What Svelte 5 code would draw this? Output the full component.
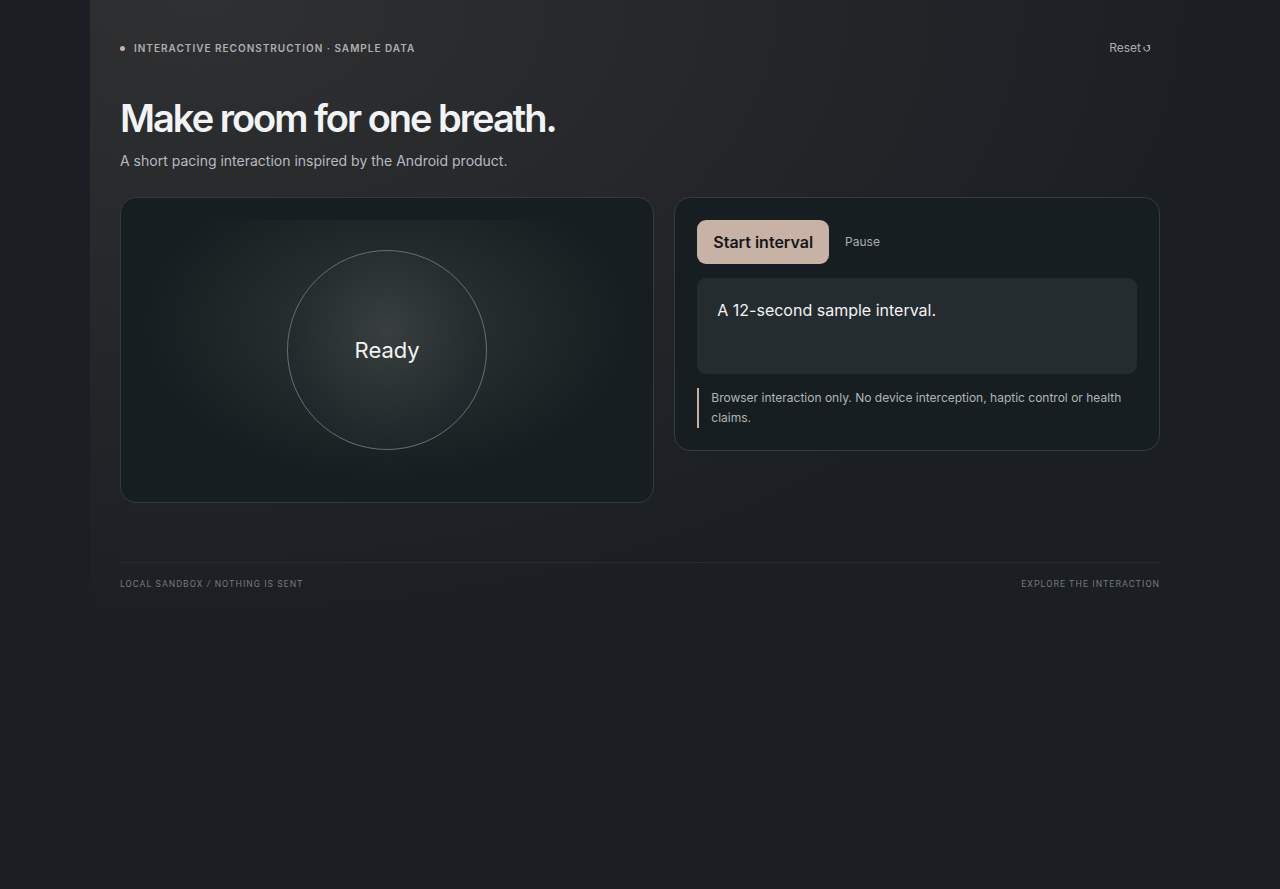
<script>
	import { onDestroy } from 'svelte';

	const LENGTH = 12;

	let elapsed = 0;
	let running = false;
	let timer;

	$: finished = elapsed >= LENGTH;
	$: label = finished
		? 'Done'
		: elapsed === 0 && !running
			? 'Ready'
			: elapsed % 8 < 4
				? 'Inhale'
				: 'Exhale';
	$: status =
		elapsed === 0 && !running
			? 'A 12-second sample interval.'
			: finished
				? 'Interval complete.'
				: `${LENGTH - elapsed} seconds left.`;

	function tick() {
		elapsed += 1;
		if (elapsed >= LENGTH) pause();
	}

	function start() {
		if (running) return;
		if (elapsed >= LENGTH) elapsed = 0;
		running = true;
		timer = setInterval(tick, 1000);
	}

	function pause() {
		running = false;
		clearInterval(timer);
	}

	function reset() {
		pause();
		elapsed = 0;
	}

	onDestroy(() => clearInterval(timer));
</script>

<main class="shell">
	<header class="topbar">
		<span class="eyebrow"><i class="dot"></i>Interactive reconstruction · sample data</span>
		<button class="quiet reset" on:click={reset}>
			Reset
			<svg viewBox="0 0 8 8" width="8" height="8" aria-hidden="true">
				<path d="M1.3 2.8A2.8 2.8 0 1 0 6 2.4M3.8 1.5h3.4M6 1.5v2.6" />
			</svg>
		</button>
	</header>

	<h1>Make room for one breath.</h1>
	<p class="lede">A short pacing interaction inspired by the Android product.</p>

	<div class="grid">
		<section class="card">
			<div class="stage">
				<div class="orb" class:running>{label}</div>
			</div>
		</section>

		<section class="card controls">
			<div class="actions">
				<button class="primary" on:click={start}>Start interval</button>
				<button class="quiet" on:click={pause}>Pause</button>
			</div>
			<div class="status" aria-live="polite">{status}</div>
			<p class="note">
				Browser interaction only. No device interception, haptic control or health claims.
			</p>
		</section>
	</div>

	<footer>
		<span>Local sandbox / nothing is sent</span>
		<span>Explore the interaction</span>
	</footer>
</main>

<style>
	:global(body) {
		background: #1b1e22;
	}

	.shell {
		box-sizing: border-box;
		max-width: 1100px;
		margin: 0 auto;
		padding: 26px 30px 24px;
		color: #f2f3f5;
		font-family: Inter, 'Liberation Sans', sans-serif;
		font-size: 16px;
		line-height: 24px;
		background: radial-gradient(at 10% 0, #2f3031, #1b1e23 74%);
	}

	.topbar,
	footer {
		display: flex;
		align-items: center;
		justify-content: space-between;
	}

	.eyebrow {
		display: flex;
		align-items: center;
		gap: 9px;
		color: #afb0b2;
		font-size: 10px;
		font-weight: 600;
		letter-spacing: 1px;
		text-transform: uppercase;
	}

	.dot {
		width: 5px;
		height: 5px;
		border-radius: 50%;
		background: #c9b3a6;
	}

	button {
		min-height: 44px;
		border: 0;
		border-radius: 9px;
		font: inherit;
		cursor: pointer;
	}

	.quiet {
		padding: 0 9px;
		background: none;
		color: #a9adb3;
		font-size: 12px;
	}

	.reset {
		display: flex;
		align-items: center;
		gap: 2px;
	}

	.reset svg {
		fill: none;
		stroke: currentColor;
		stroke-width: 1.2;
	}

	.primary {
		padding: 0 16px;
		background: #c8b2a5;
		color: #15171b;
		font-weight: 600;
	}

	h1 {
		margin: 26px 0 0;
		font-size: 38px;
		font-weight: 600;
		line-height: 44px;
		letter-spacing: -2px;
	}

	.lede {
		margin: 9px 0 0;
		color: #b6bbc2;
		font-size: 14px;
	}

	.grid {
		display: grid;
		grid-template-columns: 1.1fr 1fr;
		align-items: start;
		gap: 20px;
		margin-top: 24px;
	}

	.card {
		padding: 22px;
		border: 1px solid #343b3f;
		border-radius: 16px;
		background: #171e21;
	}

	.stage {
		display: grid;
		place-items: center;
		height: 260px;
		background: radial-gradient(at 50% 40%, #2f3736, #171e21 70%);
	}

	.orb {
		display: grid;
		place-items: center;
		box-sizing: border-box;
		width: 200px;
		height: 200px;
		border: 1px solid #667071;
		border-radius: 50%;
		background: radial-gradient(circle at 50% 40%, #383f3e, #1a2226 90%);
		font-size: 22px;
	}

	.orb.running {
		animation: breathe 8s ease-in-out infinite;
	}

	.controls {
		display: grid;
		gap: 14px;
	}

	.actions {
		display: flex;
		align-items: center;
		gap: 7px;
	}

	.status {
		box-sizing: border-box;
		min-height: 96px;
		padding: 20px;
		border-radius: 9px;
		background: #252c2f;
	}

	.note {
		margin: 0;
		padding-left: 12px;
		border-left: 2px solid #c8b2a5;
		color: #b0b5ba;
		font-size: 12px;
		line-height: 20px;
	}

	footer {
		margin-top: 59px;
		padding-top: 14px;
		border-top: 1px solid #282b2f;
		color: #74777b;
		font-family: Roboto, 'Liberation Sans', sans-serif;
		font-size: 9px;
		line-height: 14px;
		letter-spacing: 1px;
		text-transform: uppercase;
	}

	@keyframes breathe {
		50% {
			transform: scale(1.15);
		}
	}

	@media (max-width: 720px) {
		.grid {
			grid-template-columns: 1fr;
		}
	}
</style>
